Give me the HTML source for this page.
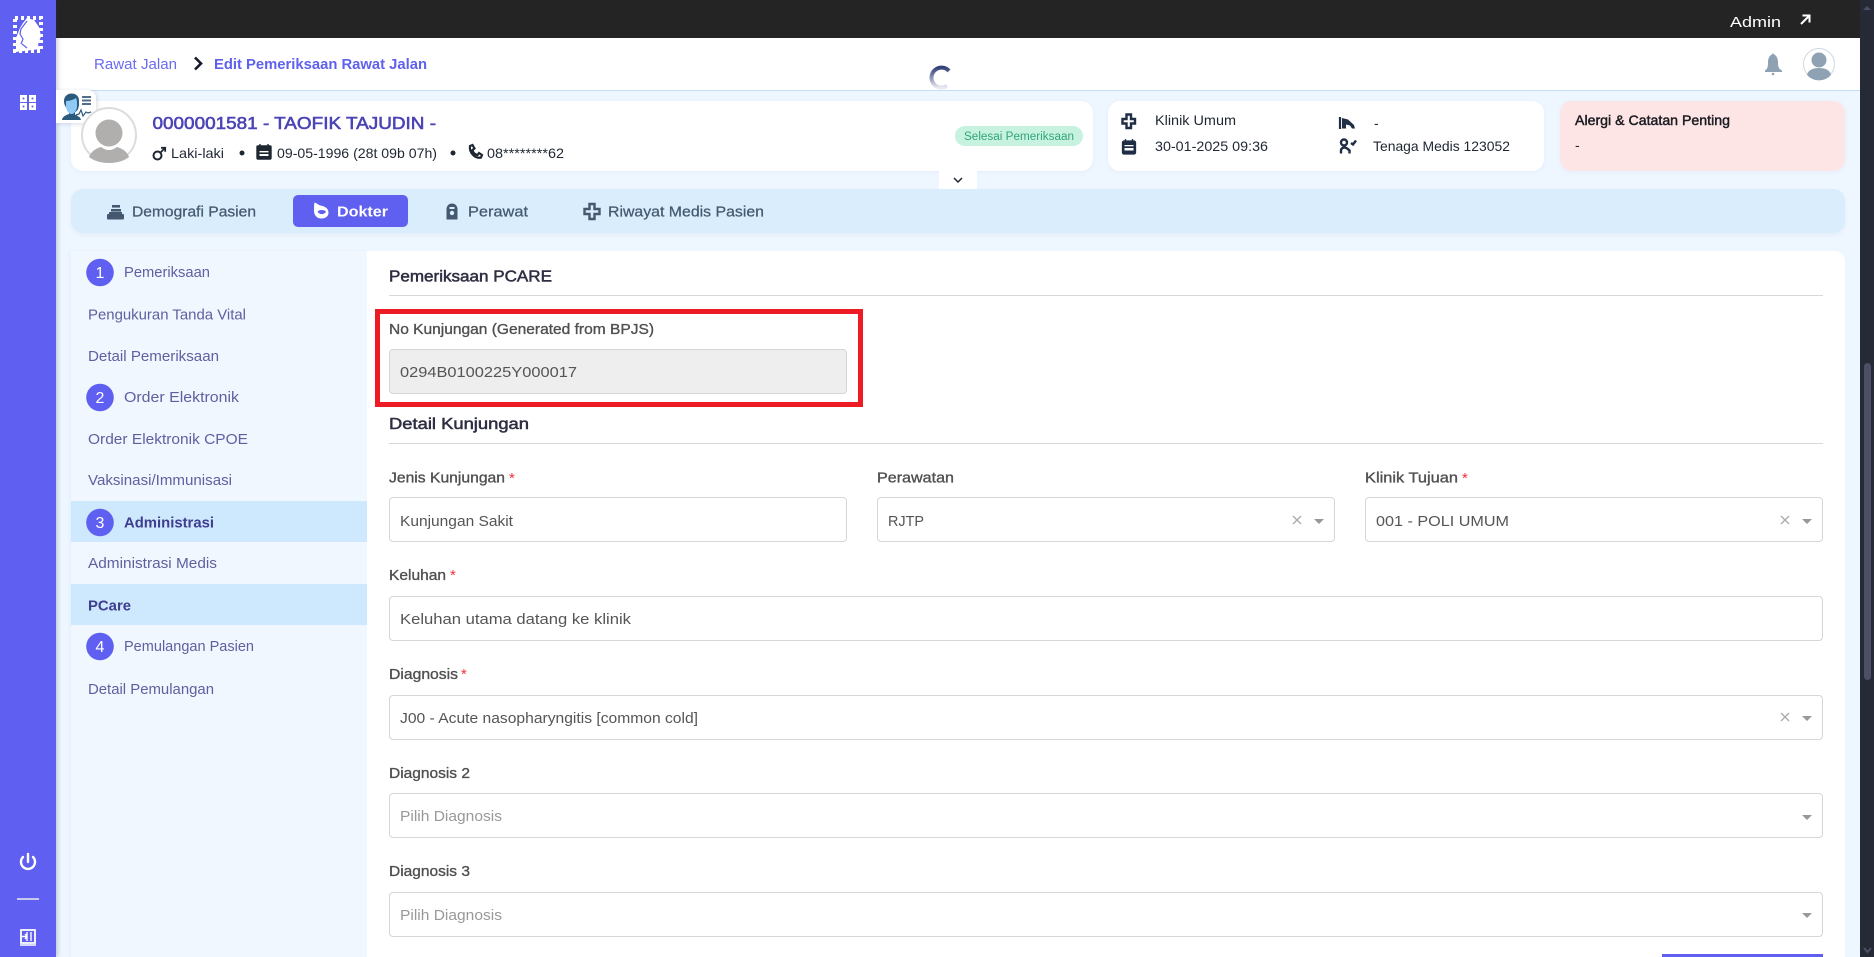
<!DOCTYPE html>
<html lang="id"><head><meta charset="utf-8"><title>Edit Pemeriksaan Rawat Jalan</title>
<style>
html,body{margin:0;padding:0;width:1874px;height:957px;overflow:hidden;background:#eef6ff;font-family:"Liberation Sans",sans-serif}
.b{position:absolute;box-sizing:border-box}
.card{background:#fff;border-radius:12px;box-shadow:0 1px 5px rgba(90,120,170,.06)}
.f{background:#fff;border:1px solid #d6d6d6;border-radius:4px;height:45px}
svg{position:absolute;left:0;top:0}
text{font-family:"Liberation Sans",sans-serif;font-size:15px;fill:#555}
.n{fill:#60609f;font-size:15px}
.d{fill:#1f2733;font-size:14px}
.h{fill:#2e2e42;font-size:15.5px;stroke:#2e2e42;stroke-width:.5px}
.l{fill:#505050;font-size:15px;stroke:#505050;stroke-width:.35px}
.r{fill:#f0303c;font-size:15px}
</style></head><body>
<div class="b" style="left:56px;top:0;width:1804px;height:38px;background:#242424"></div>
<div class="b" style="left:56px;top:38px;width:1804px;height:53px;background:#fff;border-bottom:1px solid #c5dff6"></div>
<div class="b card" style="left:71px;top:101px;width:1022px;height:70px"></div>
<div class="b" style="left:939px;top:171px;width:38px;height:18px;background:#fff"></div>
<div class="b card" style="left:1108px;top:101px;width:436px;height:70px"></div>
<div class="b card" style="left:1560px;top:101px;width:285px;height:70px;background:#fde5e5"></div>
<div class="b" style="left:71px;top:189px;width:1774px;height:44px;background:#daedfd;border-radius:12px;box-shadow:0 2px 4px rgba(90,120,170,.06)"></div>
<div class="b" style="left:293px;top:195px;width:115px;height:32px;background:#6060f0;border-radius:5px"></div>
<div class="b" style="left:71px;top:251px;width:296px;height:706px;background:#f0f7ff;box-shadow:-2px 0 3px rgba(90,120,170,.05)"></div>
<div class="b" style="left:71px;top:501px;width:296px;height:41px;background:#cee8fe"></div>
<div class="b" style="left:71px;top:584px;width:296px;height:41px;background:#cee8fe"></div>
<div class="b" style="left:367px;top:251px;width:1478px;height:706px;background:#fff;border-radius:0 10px 0 0"></div>
<div class="b" style="left:389px;top:295px;width:1434px;height:1px;background:#d8d8d8"></div>
<div class="b" style="left:389px;top:443px;width:1434px;height:1px;background:#d8d8d8"></div>
<div class="b f" style="left:389px;top:349px;width:458px;background:#eee"></div>
<div class="b" style="left:375px;top:308.500px;width:488px;height:98px;border:5px solid #ed1c24"></div>
<div class="b f" style="left:389px;top:497px;width:458px"></div>
<div class="b f" style="left:877px;top:497px;width:458px"></div>
<div class="b f" style="left:1365px;top:497px;width:458px"></div>
<div class="b f" style="left:389px;top:596px;width:1434px"></div>
<div class="b f" style="left:389px;top:695px;width:1434px"></div>
<div class="b f" style="left:389px;top:793px;width:1434px"></div>
<div class="b f" style="left:389px;top:892px;width:1434px"></div>
<div class="b" style="left:1662px;top:954px;width:161px;height:3px;background:#6060f0"></div>
<div class="b" style="left:0;top:0;width:56px;height:957px;background:#5f5ff1;box-shadow:2px 0 4px rgba(40,50,80,.22)"></div>
<div class="b" style="left:1860px;top:0;width:14px;height:957px;background:#252a36"></div>
<div class="b" style="left:1864px;top:363px;width:7px;height:317px;background:#4d4f66;border-radius:4px"></div>
<div class="b" style="left:56px;top:90px;width:40px;height:33px;background:#fff;border-radius:0 8px 8px 0;box-shadow:1px 1px 4px rgba(60,80,120,.2)"></div>

<svg width="1874" height="957" viewBox="0 0 1874 957" xmlns="http://www.w3.org/2000/svg">
<defs><linearGradient id="sp" x1="0" y1="0" x2="0" y2="1"><stop offset="0" stop-color="#33427a"/><stop offset="1" stop-color="#e9e9f2"/></linearGradient></defs>

<!-- sidebar -->
<rect x="15" y="18" width="26" height="33" fill="none" stroke="#fff" stroke-width="4" stroke-dasharray="3 3"/>
<path d="M16 52V38l4-10 3-5 4-5 7 2 5 7 2 9-3 9 2 4z" fill="#fff"/>
<path d="M27 21l-6 8-1 5 3 5-2 5M22 44l5 4" fill="none" stroke="#5f5ff1" stroke-width="1.200"/>
<g fill="none" stroke="#fff" stroke-width="2.600"><rect x="21.300" y="96.300" width="4.400" height="4.400"/><rect x="30.300" y="96.300" width="4.400" height="4.400"/><rect x="21.300" y="104.300" width="4.400" height="4.400"/><rect x="30.300" y="104.300" width="4.400" height="4.400"/></g>
<path d="M23 857a7 7 0 1 0 10 0M28 854v8" fill="none" stroke="#fff" stroke-width="2.400" stroke-linecap="round"/>
<rect x="17" y="898" width="22" height="2" fill="#c9c9ea"/>
<path d="M21 930h14v13H21z" fill="none" stroke="#fff" stroke-width="1.800"/><path d="M20 945h16M31 932v9M27 932v9M22 936.500h5M25 934l2 2.500-2 2.500" fill="none" stroke="#fff" stroke-width="1.400"/>

<!-- top -->
<text x="1730" y="27" style="fill:#fff;font-size:15px" textLength="51" lengthAdjust="spacingAndGlyphs">Admin</text>
<path d="M1801 24l8-8M1802.500 15.500h7v7" fill="none" stroke="#fff" stroke-width="2"/>
<text x="94" y="69" style="fill:#6b6bf2;font-size:15px" textLength="83" lengthAdjust="spacingAndGlyphs">Rawat Jalan</text>
<path d="M195 57.500l6 6-6 6" fill="none" stroke="#151a28" stroke-width="2.600"/>
<text x="214" y="69" style="fill:#6060ee;font-size:15px;font-weight:bold" textLength="213" lengthAdjust="spacingAndGlyphs">Edit Pemeriksaan Rawat Jalan</text>
<path d="M949 71A10 10 0 1 0 947 86" fill="none" stroke="url(#sp)" stroke-width="4"/>
<path d="M1765 70.500c3-2 3-5 3-8.500 0-4 2-7 4-7.500.3-1.500 1.700-1.500 2 0 2 .5 4 3.500 4 7.500 0 3.500 0 6.500 4 8.500v1.500h-17z" fill="#8fa2b4"/><circle cx="1773" cy="74" r="1.300" fill="#8fa2b4"/>
<circle cx="1819" cy="64" r="15.500" fill="#fff" stroke="#cfd8e0"/>
<circle cx="1819" cy="60" r="7.500" fill="#8fa2b4"/><path d="M1807 75c1-5 6-7 12-7s11 2 12 7a16 16 0 0 1-24 0z" fill="#8fa2b4"/>

<!-- patient -->
<circle cx="109" cy="135" r="27" fill="#fff" stroke="#dcdcdc" stroke-width="2"/>
<circle cx="109" cy="133" r="13.500" fill="#b1afad"/>
<path d="M89 157c2-6 8-9 12-10 3 2 5 3 8 3s5-1 8-3c4 1 10 4 12 10-5 4-12 6-20 6s-15-2-20-6z" fill="#b1afad"/>
<path d="M62 120c0-3 4-5 7-6v-4c-3-2-5-5-5-9 0-5 4-7.500 7.500-7.500s7.500 2 7.500 7v5l-1 4-3 3v2l5 3 1 2.500z" fill="#2c5a7c"/>
<path d="M66 101c3 0 7-1 10-3l1 3v5c0 4-2.500 8-5.500 8S66 110 66 106z" fill="#8fc9f6"/>
<path d="M82 97h9M82 100.500h9M82 104h9" stroke="#4f6f8c" stroke-width="2"/>
<path d="M76 115l3-1 2-4 2 6 3-4 2 1 3-1" fill="none" stroke="#2c5a7c" stroke-width="1.200"/>
<text x="152.500" y="129" style="fill:#4a44b6;font-size:17.500px;stroke:#4a44b6;stroke-width:.6px" textLength="283.500" lengthAdjust="spacingAndGlyphs">0000001581 - TAOFIK TAJUDIN -</text>
<circle cx="157.500" cy="155.500" r="4" fill="none" stroke="#1f2733" stroke-width="2"/><path d="M160.500 152.500l4-4M161 147.800h4.200v4" fill="none" stroke="#1f2733" stroke-width="1.800"/>
<text x="171" y="158" class="d" textLength="53" lengthAdjust="spacingAndGlyphs">Laki-laki</text>
<circle cx="242" cy="153" r="2.500" fill="#1f2733"/>
<path d="M258 146h12a1 1 0 0 1 1 1v11a1 1 0 0 1-1 1h-12a1 1 0 0 1-1-1v-11a1 1 0 0 1 1-1zM260 144v3M268 144v3" fill="#1f2733" stroke="#1f2733" stroke-width="1.400"/><rect x="259.500" y="151" width="9" height="1.400" fill="#fff"/><rect x="259.500" y="154" width="9" height="2" fill="#fff"/>
<text x="277" y="158" class="d" textLength="160" lengthAdjust="spacingAndGlyphs">09-05-1996 (28t 09b 07h)</text>
<circle cx="453" cy="153" r="2.500" fill="#1f2733"/>
<path d="M470 146l2.500-1 2 3.500-2 1.500c.5 2.500 2.500 4.500 5 5l1.500-2 3 2-1 2.500c-6 1.500-12-5-11-11.500z" fill="none" stroke="#1f2733" stroke-width="2.200"/>
<text x="487" y="158" class="d" textLength="77" lengthAdjust="spacingAndGlyphs">08********62</text>
<rect x="955" y="126" width="128" height="20" rx="10" fill="#c8f2e0"/>
<text x="964" y="140" style="fill:#2fa57e;font-size:11.500px" textLength="110" lengthAdjust="spacingAndGlyphs">Selesai Pemeriksaan</text>
<path d="M954 178l4 4 4-4" fill="none" stroke="#1f2733" stroke-width="1.500"/>

<!-- card 2 -->
<path d="M1126.500 114.500h4.500v4.500h4v4.500h-4v4.500h-4.500v-4.500h-4v-4.500h4z" fill="none" stroke="#1f2d45" stroke-width="2.400"/>
<text x="1155" y="125" class="d" textLength="81" lengthAdjust="spacingAndGlyphs">Klinik Umum</text>
<path d="M1124 141h10a1.500 1.500 0 0 1 1.500 1.500v10a1.500 1.500 0 0 1-1.500 1.500h-10a1.500 1.500 0 0 1-1.500-1.500v-10a1.500 1.500 0 0 1 1.500-1.500zM1125.500 139v3M1132.500 139v3" fill="#1f2d45" stroke="#1f2d45" stroke-width="1.300"/><rect x="1124.500" y="145" width="9" height="1.300" fill="#fff"/><rect x="1124.500" y="148" width="9" height="2.500" fill="#fff"/>
<text x="1155" y="151" class="d" textLength="113" lengthAdjust="spacingAndGlyphs">30-01-2025 09:36</text>
<path d="M1340 117v12" stroke="#1f2d45" stroke-width="2.200"/><path d="M1342 118l6 1.500 6 5.500 1 3.500h-3l-2-3-4-1v4h-4z" fill="#1f2d45"/>
<text x="1374" y="128" class="d">-</text>
<circle cx="1344" cy="142.500" r="3" fill="none" stroke="#1f2d45" stroke-width="2.400"/><path d="M1341 153.500v-3c0-2 2-3 3.500-3s3 1 5 3v3M1351 143l2 1.500 3-4" fill="none" stroke="#1f2d45" stroke-width="2.400"/>
<text x="1373" y="151" class="d" textLength="137" lengthAdjust="spacingAndGlyphs">Tenaga Medis 123052</text>
<text x="1575" y="125" style="fill:#1b1b22;font-size:14px;stroke:#1b1b22;stroke-width:.45px" textLength="155" lengthAdjust="spacingAndGlyphs">Alergi &amp; Catatan Penting</text>
<text x="1575" y="150" class="d">-</text>

<!-- tabs -->
<g fill="#44596f"><rect x="112" y="205" width="8" height="2.600"/><rect x="111" y="209" width="10" height="2.600"/><rect x="107" y="214" width="17" height="5.500" rx="1"/><rect x="109" y="212" width="13" height="2"/></g>
<text x="132" y="216.500" style="fill:#44596f;font-size:15px;stroke:#44596f;stroke-width:.25px" textLength="124" lengthAdjust="spacingAndGlyphs">Demografi Pasien</text>
<path d="M314.500 202.500c2 .3 3.500 2.500 6 3 4.500 .8 8 3 8 7 0 4-3 6-7 6-4.500 0-7.500-3-7.500-8 0-3 0-5.500 .5-8z" fill="#fff"/><path d="M317.500 211.500c2-2 6.500-2 8.500 0-1.500 3.500-7 3.500-8.500 0z" fill="#6060f0"/>
<text x="337" y="216.500" style="fill:#fff;font-size:15px;font-weight:bold" textLength="51" lengthAdjust="spacingAndGlyphs">Dokter</text>
<path d="M446.500 219.500v-10c0-3.500 2-6 5.500-6s5.500 2.500 5.500 6v10z" fill="#44596f"/><rect x="449.500" y="207" width="5" height="2" fill="#daedfd"/><circle cx="452" cy="213" r="2.200" fill="#daedfd"/>
<text x="468" y="216.500" style="fill:#44596f;font-size:15px;stroke:#44596f;stroke-width:.25px" textLength="60" lengthAdjust="spacingAndGlyphs">Perawat</text>
<path d="M589.500 204h5v5h5v5h-5v5h-5v-5h-5v-5h5z" fill="none" stroke="#44596f" stroke-width="2.400"/>
<text x="608" y="216.500" style="fill:#44596f;font-size:15px;stroke:#44596f;stroke-width:.25px" textLength="156" lengthAdjust="spacingAndGlyphs">Riwayat Medis Pasien</text>

<!-- nav -->
<g fill="#5f5ff1"><circle cx="100" cy="272.500" r="13.800"/><circle cx="100" cy="397.500" r="13.800"/><circle cx="100" cy="522.500" r="13.800"/><circle cx="100" cy="646.500" r="13.800"/></g>
<text x="95.500" y="278" style="fill:#fff;font-size:16px">1</text><text x="95.500" y="403" style="fill:#fff;font-size:16px">2</text><text x="95.500" y="528" style="fill:#fff;font-size:16px">3</text><text x="95.500" y="652" style="fill:#fff;font-size:16px">4</text>
<text x="124" y="277" class="n" textLength="86" lengthAdjust="spacingAndGlyphs">Pemeriksaan</text>
<text x="88" y="319.500" class="n" textLength="158" lengthAdjust="spacingAndGlyphs">Pengukuran Tanda Vital</text>
<text x="88" y="361" class="n" textLength="131" lengthAdjust="spacingAndGlyphs">Detail Pemeriksaan</text>
<text x="124" y="402" class="n" textLength="115" lengthAdjust="spacingAndGlyphs">Order Elektronik</text>
<text x="88" y="444" class="n" textLength="160" lengthAdjust="spacingAndGlyphs">Order Elektronik CPOE</text>
<text x="88" y="485" class="n" textLength="144" lengthAdjust="spacingAndGlyphs">Vaksinasi/Immunisasi</text>
<text x="124" y="527.500" style="fill:#3f3d8f;font-size:15px;font-weight:bold" textLength="90" lengthAdjust="spacingAndGlyphs">Administrasi</text>
<text x="88" y="568" class="n" textLength="129" lengthAdjust="spacingAndGlyphs">Administrasi Medis</text>
<text x="88" y="610.500" style="fill:#3f3d8f;font-size:15px;font-weight:bold" textLength="43" lengthAdjust="spacingAndGlyphs">PCare</text>
<text x="124" y="651" class="n" textLength="130" lengthAdjust="spacingAndGlyphs">Pemulangan Pasien</text>
<text x="88" y="694" class="n" textLength="126" lengthAdjust="spacingAndGlyphs">Detail Pemulangan</text>

<!-- form -->
<text x="389" y="281.500" class="h" textLength="163" lengthAdjust="spacingAndGlyphs">Pemeriksaan PCARE</text>
<text x="389" y="334" class="l" textLength="265" lengthAdjust="spacingAndGlyphs">No Kunjungan (Generated from BPJS)</text>
<text x="400" y="377" textLength="177" lengthAdjust="spacingAndGlyphs">0294B0100225Y000017</text>
<text x="389" y="429" class="h" textLength="140" lengthAdjust="spacingAndGlyphs">Detail Kunjungan</text>
<text x="389" y="482.500" class="l" textLength="116" lengthAdjust="spacingAndGlyphs">Jenis Kunjungan</text><text x="509" y="483" class="r">*</text>
<text x="877" y="482.500" class="l" textLength="77" lengthAdjust="spacingAndGlyphs">Perawatan</text>
<text x="1365" y="482.500" class="l" textLength="93" lengthAdjust="spacingAndGlyphs">Klinik Tujuan</text><text x="1462" y="483" class="r">*</text>
<text x="400" y="526" textLength="113" lengthAdjust="spacingAndGlyphs">Kunjungan Sakit</text>
<text x="888" y="526" textLength="36" lengthAdjust="spacingAndGlyphs">RJTP</text>
<text x="1376" y="526" textLength="133" lengthAdjust="spacingAndGlyphs">001 - POLI UMUM</text>
<text x="389" y="580" class="l" textLength="57" lengthAdjust="spacingAndGlyphs">Keluhan</text><text x="450" y="580" class="r">*</text>
<text x="400" y="624" textLength="231" lengthAdjust="spacingAndGlyphs">Keluhan utama datang ke klinik</text>
<text x="389" y="679" class="l" textLength="69" lengthAdjust="spacingAndGlyphs">Diagnosis</text><text x="461" y="679" class="r">*</text>
<text x="400" y="723" textLength="298" lengthAdjust="spacingAndGlyphs">J00 - Acute nasopharyngitis [common cold]</text>
<text x="389" y="778" class="l" textLength="81" lengthAdjust="spacingAndGlyphs">Diagnosis 2</text>
<text x="400" y="821" style="fill:#999" textLength="102" lengthAdjust="spacingAndGlyphs">Pilih Diagnosis</text>
<text x="389" y="876" class="l" textLength="81" lengthAdjust="spacingAndGlyphs">Diagnosis 3</text>
<text x="400" y="920" style="fill:#999" textLength="102" lengthAdjust="spacingAndGlyphs">Pilih Diagnosis</text>

<g fill="#999"><path d="M1314 519h10l-5 5zM1802 519h10l-5 5zM1802 716h10l-5 5zM1802 815h10l-5 5zM1802 913h10l-5 5z"/></g>
<g stroke="#aaa" stroke-width="1.300" fill="none"><path d="M1293 516l8 8M1301 516l-8 8M1781 516l8 8M1789 516l-8 8M1781 713l8 8M1789 713l-8 8"/></g>

<!-- scrollbar arrows -->
<path d="M1863 10l4-4 4 4z" fill="#4d4f66"/><path d="M1864 948l3.500 4 3.500-4" fill="none" stroke="#4d4f66" stroke-width="2"/>
</svg>
</body></html>
